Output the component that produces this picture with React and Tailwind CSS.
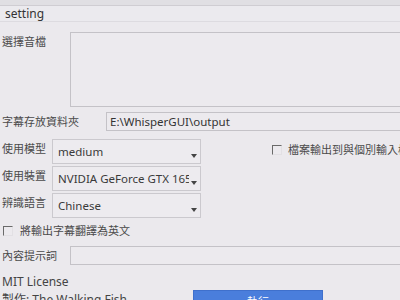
export default function App() {
  const label = "text-[11px] leading-[16px] text-[#4a4a4a] whitespace-nowrap";
  const selectBox =
    "relative w-[149px] h-[25px] border border-[#cbc9ce] bg-[#edebef] pl-[5px] flex items-center text-[11.5px] text-[#3a3a3a] whitespace-nowrap overflow-hidden";

  const Arrow = () => (
    <span className="absolute right-[3px] bottom-[5px] w-0 h-0 border-l-[3px] border-r-[3px] border-t-[4px] border-l-transparent border-r-transparent border-t-[#444]" />
  );

  const Check = () => (
    <span className="inline-block shrink-0 w-[10px] h-[10px] border-t border-l border-t-[#6a6a6a] border-l-[#6a6a6a] border-r border-b border-r-[#e2e0e4] border-b-[#e2e0e4] bg-[#eceaee]" />
  );

  const rows = [
    { name: '使用模型', value: 'medium' },
    { name: '使用裝置', value: 'NVIDIA GeForce GTX 1650' },
    { name: '辨識語言', value: 'Chinese' },
  ];

  return (
    <div className="w-[400px] h-[300px] overflow-hidden bg-[#ebe9ed] font-['Noto_Sans','Noto_Sans_CJK_TC',sans-serif] text-[#444]">
      {/* title strip */}
      <div className="h-[6px] bg-[#e0dfe3] border-b border-[#cfcdd2]" />
      <div className="h-[16px] bg-[#ebeaee] border-b border-[#dddbe0] pl-[5px] text-[12px] leading-[15px] text-[#333]">
        setting
      </div>

      {/* audio file */}
      <div className="mt-[10px] flex">
        <div className={`w-[70px] pl-[2px] pt-[2px] ${label}`}>選擇音檔</div>
        <div className="flex-1 h-[75px] border border-r-0 border-[#c4c2c7] bg-[#eceaee]" />
      </div>

      {/* output folder */}
      <div className="mt-[5px] flex items-center">
        <div className={`w-[106px] pl-[2px] ${label}`}>字幕存放資料夾</div>
        <div className="flex-1 h-[19px] border border-r-0 border-[#c4c2c7] bg-[#eceaee] pl-[3px] flex items-center text-[11.5px] text-[#333] whitespace-nowrap">
          E:\WhisperGUI\output
        </div>
      </div>

      {/* selects + side option */}
      <div className="mt-[8px] flex">
        <div className="flex flex-col gap-[2px]">
          {rows.map((r) => (
            <div key={r.name} className="flex items-start">
              <div className={`w-[52px] pl-[2px] pt-[2px] ${label}`}>{r.name}</div>
              <div className={selectBox}>
                <span className="block w-[131px] overflow-hidden">{r.value}</span>
                <Arrow />
              </div>
            </div>
          ))}
        </div>
        <div className="ml-[71px] mt-[3px] h-[16px] flex items-center gap-[6px] whitespace-nowrap">
          <Check />
          <span className={label}>檔案輸出到與個別輸入檔案相同的資料夾</span>
        </div>
      </div>

      {/* translate */}
      <div className="mt-[5px] h-[16px] pl-[3px] flex items-center gap-[7px]">
        <Check />
        <span className={label}>將輸出字幕翻譯為英文</span>
      </div>

      {/* prompt */}
      <div className="mt-[7px] flex items-center">
        <div className={`w-[70px] pl-[2px] ${label}`}>內容提示詞</div>
        <div className="flex-1 h-[19px] border border-r-0 border-[#c4c2c7] bg-[#eceaee]" />
      </div>

      {/* footer */}
      <div className="mt-[10px] pl-[2px] text-[12px] leading-[14px] text-[#444]">MIT License</div>
      <div className="mt-[1px] flex items-start">
        <div className="w-[193px] pl-[2px] pt-[3px] text-[12px] leading-[14px] text-[#444] whitespace-nowrap">
          製作: The Walking Fish
        </div>
        <button className="w-[130px] h-[24px] bg-[#4a7edc] border border-[#3f70cc] text-white text-[11px] leading-[20px]">
          執行
        </button>
      </div>
    </div>
  );
}
